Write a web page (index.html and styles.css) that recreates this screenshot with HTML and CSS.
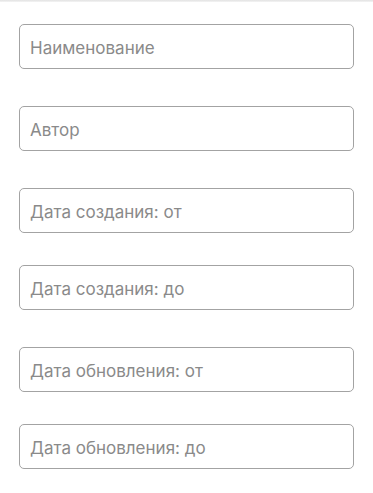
FILE: index.html
```html
<!DOCTYPE html>
<html lang="ru">
<head>
<meta charset="utf-8">
<link rel="stylesheet" href="styles.css">
</head>
<body>
<div class="topbar"></div>
<form class="filters">
  <div class="field"><span class="ph">Наименование</span></div>
  <div class="field"><span class="ph">Автор</span></div>
  <div class="pair">
    <div class="field"><span class="ph">Дата создания: от</span></div>
    <div class="field"><span class="ph">Дата создания: до</span></div>
  </div>
  <div class="pair">
    <div class="field"><span class="ph">Дата обновления: от</span></div>
    <div class="field"><span class="ph">Дата обновления: до</span></div>
  </div>
</form>
</body>
</html>
```
FILE: styles.css
```css
html, body {
  margin: 0;
  padding: 0;
  background: #ffffff;
}
body {
  font-family: Inter, "Liberation Sans", sans-serif;
}
.topbar {
  height: 2px;
  background: linear-gradient(#e2e2e2, #f4f4f4);
}
.filters {
  display: flex;
  flex-direction: column;
  gap: 37px;
  padding: 22px 19px 0 19px;
}
.pair {
  display: flex;
  flex-direction: column;
  gap: 32px;
}
.field {
  box-sizing: border-box;
  height: 45px;
  border: 1px solid #a3a3a3;
  border-radius: 5px;
  display: flex;
  align-items: center;
  padding: 3px 10px 0 10px;
}
.ph {
  font-size: 17px;
  font-weight: 400;
  color: #8a8a8a;
}
```
